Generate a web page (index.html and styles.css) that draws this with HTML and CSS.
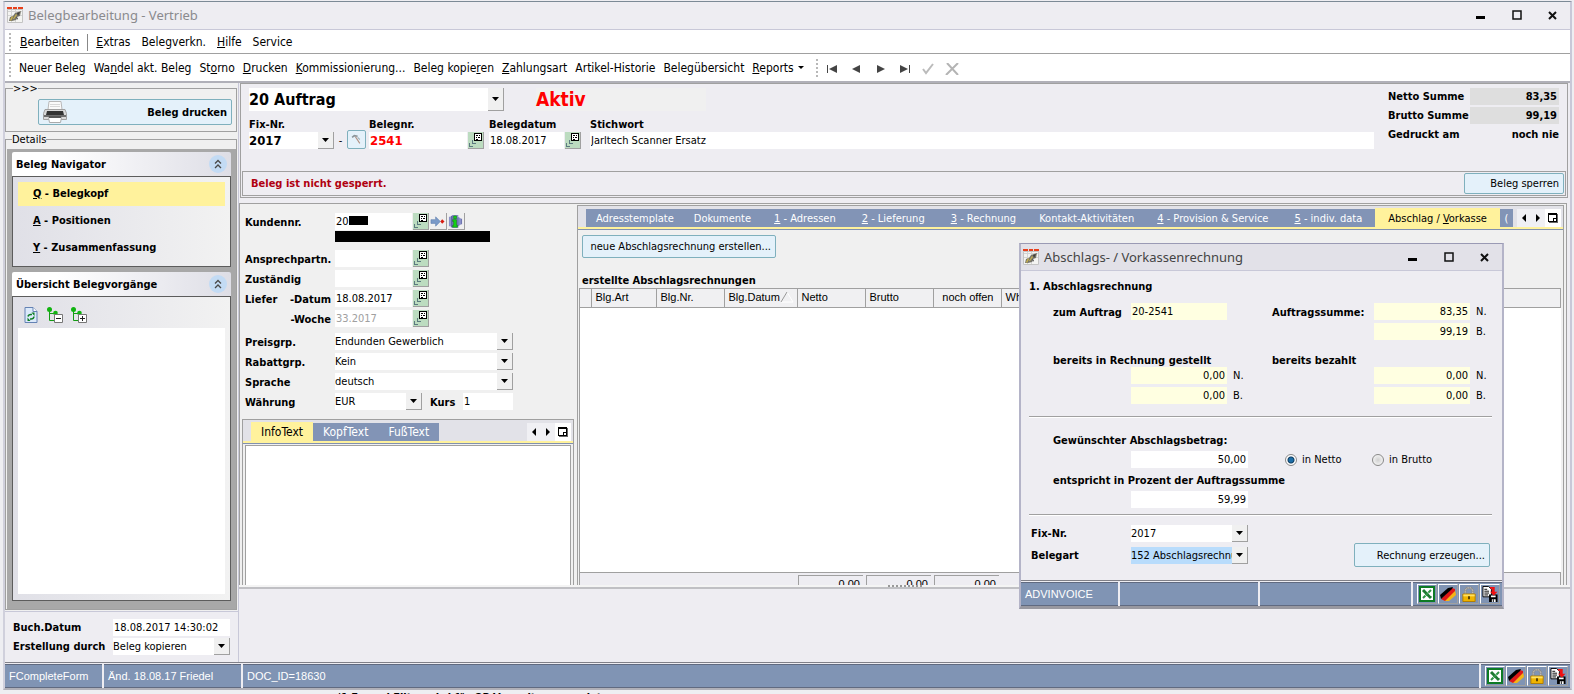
FILE: index.html
```
<!DOCTYPE html>
<html lang="de">
<head>
    <meta charset="UTF-8">
    <meta name="viewport" content="width=device-width, initial-scale=1.0">
    <title>Belegbearbeitung - Vertrieb</title>
    <link rel="stylesheet" href="styles.css">
</head>
<body>

    <!-- Icons -->
    <svg class="sprite" aria-hidden="true">
        <symbol id="i-app" viewBox="0 0 16 16">
            <path fill="#f4f4f2" stroke="#c4c4c4" d="M.5 2.500h15v13H.5z"/>
            <path fill="#e8401c" d="M0 0h5v2H0zM6 0h4v2H6zM11 0h5v2h-5z"/>
            <path stroke="#d4d4d4" d="M1 4.500h14M1 8.500h14M4.500 3v12M8.500 3v12"/>
            <path fill="#77756a" d="M2 14l1-4 3-1 2-3 6-2-1 5-3 1-1 3-4 1z"/>
            <path fill="#c9b24c" d="M3 13l2-4 1 1-2 4zM6 12l3-5 1 1-3 4z"/>
            <path fill="#3f3f3c" d="M10 6l3-1-2 4zM9 10l2 1-1 2z"/>
        </symbol>
        <symbol id="i-printer" viewBox="0 0 24 22">
            <path fill="#fafafa" stroke="#b8b8b8" d="M6 .5h12l1 8H5z"/>
            <path stroke="#d8d8d8" d="M7 3.500h10M7 5.500h10"/>
            <path fill="#d9d9d9" stroke="#a0a0a0" d="M2 8.500h20l1.500 4v6H.5v-6z"/>
            <path fill="#333" d="M4 10h16l1 4H3z"/>
            <path fill="#6d6d6d" d="M1 14h22v2H1z"/>
            <path fill="#fff" stroke="#aaa" d="M5.500 16.500h13l-1 5h-11z"/>
            <path fill="#555" d="M6 15h12v2H6z"/>
        </symbol>
        <symbol id="i-pick" viewBox="0 0 15 16">
            <path fill="#fff" d="M6 1h8v8H6z"/>
            <path fill="#000" d="M6 1h8v1H6zM6 1h1v8H6zM13 1h1v8h-1zM6 8h8v1H6zM8 3h2v1H8zM11 3h1v1h-1zM8 5h1v1H8zM10 5h2v1h-2zM8 7h2v1H8z"/>
            <path fill="#5c7a80" d="M4 8h1v4H4zM4 11h4v1H4zM1 11h1v4H1zM1 14h4v1H1z"/>
        </symbol>
        <symbol id="i-hammer" viewBox="0 0 10 10">
            <path fill="none" stroke="#8a9499" stroke-width="1.500" d="M1 3l2-1.500 3 .5"/>
            <path stroke="#b08f80" d="M4 2.500l4 6"/>
            <path stroke="#9fb0ba" d="M6 3l2 2"/>
        </symbol>
        <symbol id="i-goto" viewBox="0 0 16 16">
            <path fill="#7a9ac8" stroke="#5c7cab" stroke-width=".6" d="M1 6h5V3l5 5-5 5v-3H1z"/>
            <path fill="#d81c10" d="M13 5.500L15.500 8 13 10.500 11 8z"/>
        </symbol>
        <symbol id="i-info" viewBox="0 0 16 16">
            <path fill="#8a90c8" d="M1 3h2v10H1zM4 1h7v14H4zM11 3l3 2v6l-3 2z"/>
            <path fill="#5f66a8" d="M3 2h2v12H3zM14 5h1v6h-1zM10 4h1v9h-1z"/>
            <path fill="#14d414" stroke="#0a7a0a" stroke-width=".6" d="M6 2h3v3H6zM5 6h4v6h1v2H5v-2h1V8H5z"/>
        </symbol>
        <symbol id="i-up" viewBox="0 0 18 18">
            <circle cx="9" cy="9" r="9" fill="#c3dbf4"/>
            <path fill="none" stroke="#4a4a4a" stroke-width="1.300" d="M6 8.500l3-3 3 3M6 13l3-3 3 3"/>
        </symbol>
        <symbol id="i-refresh" viewBox="0 0 13 16">
            <path fill="#dbe9fa" stroke="#6482b4" d="M.5.5h8l4 4v11H.5z"/>
            <path fill="#fff" stroke="#6482b4" d="M8.500.5v4h4"/>
            <path fill="none" stroke="#0c7d22" stroke-width="1.500" d="M3.500 9.500q.5-2.500 4-2M9.500 9.500q-.5 3-4 2.500"/>
            <path fill="#0c7d22" d="M7 5.500h3V9zM6 14H3v-3.500z"/>
        </symbol>
        <symbol id="i-tree" viewBox="0 0 16 16">
            <path fill="none" stroke="#149c14" d="M2.500 3v10.500H8M2.500 6.500H8"/>
            <circle cx="2.500" cy="2.500" r="2.500" fill="#10b410"/>
            <circle cx="8.500" cy="6" r="2.300" fill="#10b410"/>
            <path fill="#fff" stroke="#777" d="M7.500 7.500h8v8h-8z"/>
            <path stroke="#222" d="M9 11.500h5"/>
        </symbol>
        <symbol id="i-treeplus" viewBox="0 0 16 16">
            <use href="#i-tree"/>
            <path stroke="#222" d="M11.500 9v5"/>
        </symbol>
        <symbol id="i-left" viewBox="0 0 8 8"><path d="M6 0v8L2 4z"/></symbol>
        <symbol id="i-right" viewBox="0 0 8 8"><path d="M2 0v8l4-4z"/></symbol>
        <symbol id="i-list" viewBox="0 0 10 10">
            <path d="M0 0h9v9H0z"/>
            <path fill="#fff" d="M1 2h7v6H1z"/>
            <path fill="#666" d="M9 1h1v9H1V9h8z"/>
            <path d="M5 5h3v1H6v2H5z"/>
        </symbol>
        <symbol id="i-excel" viewBox="0 0 16 16">
            <path fill="#fff" stroke="#0d7a24" stroke-width="2" d="M1 1h14v14H1z"/>
            <path stroke="#1d7a30" stroke-width="3" d="M4 4l8 8"/>
            <path stroke="#2f9444" stroke-width="2" d="M12 4l-8 8"/>
            <path stroke="#fff" stroke-width=".6" d="M6 3l6 7M3 6l6 6"/>
        </symbol>
        <symbol id="i-flag" viewBox="0 0 16 16">
            <path fill="#f4b416" d="M4 15L15 4l1 5-7 6z"/>
            <path fill="#e01818" d="M1 13L12 2l3 1v2L5 15z"/>
            <path d="M0 9l8-7 5-1-1 2L1 13z"/>
        </symbol>
        <symbol id="i-lock" viewBox="0 0 16 17">
            <path fill="none" stroke="#8c8c8c" stroke-width="2.500" d="M4 9V4.500L6 2h4l2 2.500V9"/>
            <path fill="none" stroke="#ddd" stroke-dasharray="1 1" d="M4 8V4.500L6 2h4l2 2.500V8"/>
            <path fill="#f0b400" stroke="#b07c00" d="M1.500 8.500h13v8h-13z"/>
            <path fill="#ffe060" d="M2 9h12v2H2z"/>
            <path fill="#553c00" d="M7 11h2v3H7z"/>
        </symbol>
        <symbol id="i-export" viewBox="0 0 16 17">
            <path fill="#fff" stroke="#000" d="M.5.5h6l3 3v8h-9z"/>
            <path stroke="#000" d="M2 3.500h3M2 5.500h5M2 7.500h5M2 9.500h4"/>
            <path d="M7 9h9v8H7z"/>
            <path fill="#fff" d="M9 10h5v2H9zM10 14h4v3h-4z"/>
            <path d="M11 14h1v3h-1z"/>
            <path fill="#f01010" d="M8 1h5v5h3l-4 4-4-4h2V3H8z"/>
        </symbol>
        <symbol id="i-min" viewBox="0 0 12 12"><path d="M1 7h9v3H1z"/></symbol>
        <symbol id="i-max" viewBox="0 0 12 12"><path fill="none" stroke="#111" stroke-width="1.500" d="M2 2h8v8H2z"/></symbol>
        <symbol id="i-close" viewBox="0 0 12 12"><path fill="none" stroke="#111" stroke-width="2" d="M2 3l7 7M9 3l-7 7"/></symbol>
    </svg>

    <div class="window">
        <header class="titlebar">
            <svg class="ic16"><use href="#i-app"/></svg>
            <h1>Belegbearbeitung - Vertrieb</h1>
            <button class="win" aria-label="Minimieren"><svg><use href="#i-min"/></svg></button>
            <button class="win" aria-label="Maximieren"><svg><use href="#i-max"/></svg></button>
            <button class="win" aria-label="Schließen"><svg><use href="#i-close"/></svg></button>
        </header>

        <nav class="menubar">
            <span class="grip"></span>
            <button class="first"><u>B</u>earbeiten</button>
            <button><u>E</u>xtras</button>
            <button>Belegverkn.</button>
            <button><u>H</u>ilfe</button>
            <button>Service</button>
        </nav>

        <nav class="toolbar">
            <span class="grip"></span>
            <button>Neuer Beleg</button>
            <button>Wa<u>n</u>del akt. Beleg</button>
            <button>St<u>o</u>rno</button>
            <button><u>D</u>rucken</button>
            <button><u>K</u>ommissionierung...</button>
            <button>Beleg kopie<u>r</u>en</button>
            <button><u>Z</u>ahlungsart</button>
            <button>Artikel-Historie</button>
            <button>Belegübersicht</button>
            <button class="drop"><u>R</u>eports</button>
            <span class="grip"></span>
            <div class="record-nav">
                <button aria-label="Erster"><svg viewBox="0 0 14 12"><path d="M2 2h1v8H2zM12 2v8L4 6z"/></svg></button>
                <button aria-label="Zurück"><svg viewBox="0 0 14 12"><path d="M11 2v8L3 6z"/></svg></button>
                <button aria-label="Weiter"><svg viewBox="0 0 14 12"><path d="M4 2v8l8-4z"/></svg></button>
                <button aria-label="Letzter"><svg viewBox="0 0 14 12"><path d="M12 2h1v8h-1zM3 2v8l8-4z"/></svg></button>
                <button aria-label="Speichern"><svg viewBox="0 0 14 12"><path fill="none" stroke="#bbb" stroke-width="2" d="M2 6l3 4 7-9"/></svg></button>
                <button aria-label="Abbrechen"><svg viewBox="0 0 14 12"><path fill="none" stroke="#b4b4b4" stroke-width="2" d="M2 0l11 12M13 0L1 12"/></svg></button>
            </div>
        </nav>

        <div class="main">
            <aside class="side">
                <fieldset class="quick">
                    <legend>&gt;&gt;&gt;</legend>
                    <button class="btn print"><svg><use href="#i-printer"/></svg>Beleg drucken</button>
                </fieldset>

                <fieldset class="details">
                    <legend>Details</legend>
                    <div class="groups">
                        <section class="group">
                            <h2>Beleg Navigator <button class="fold" aria-label="Einklappen"><svg><use href="#i-up"/></svg></button></h2>
                            <div class="group-body links">
                                <a href="#" class="active"><u>Q</u> - Belegkopf</a>
                                <a href="#"><u>A</u> - Positionen</a>
                                <a href="#"><u>Y</u> - Zusammenfassung</a>
                            </div>
                        </section>
                        <section class="group grow">
                            <h2>Übersicht Belegvorgänge <button class="fold" aria-label="Einklappen"><svg><use href="#i-up"/></svg></button></h2>
                            <div class="group-body tree">
                                <div class="tree-tools">
                                    <button aria-label="Aktualisieren"><svg><use href="#i-refresh"/></svg></button>
                                    <button aria-label="Zuklappen"><svg><use href="#i-tree"/></svg></button>
                                    <button aria-label="Aufklappen"><svg><use href="#i-treeplus"/></svg></button>
                                </div>
                                <div class="tree-list"></div>
                            </div>
                        </section>
                    </div>
                </fieldset>

                <div class="created">
                    <label for="buchdatum">Buch.Datum</label>
                    <input id="buchdatum" value="18.08.2017 14:30:02">
                    <label for="erstellung">Erstellung durch</label>
                    <span class="combo"><select id="erstellung"><option>Beleg kopieren</option></select></span>
                </div>
            </aside>

            <main class="content">
                <section class="head">
                    <div class="head-top">
                        <div class="head-fields">
                            <div class="head-row">
                                <span class="combo big"><select aria-label="Belegart"><option>20 Auftrag</option></select></span>
                                <strong class="state">Aktiv</strong>
                            </div>
                            <div class="head-row keys">
                                <div class="field fix">
                                    <label for="fixnr">Fix-Nr.</label>
                                    <span class="combo strong"><select id="fixnr"><option>2017</option></select></span>
                                </div>
                                <span class="dash">-</span>
                                <button class="btn tool" aria-label="Nummer ändern"><svg><use href="#i-hammer"/></svg></button>
                                <div class="field nr">
                                    <label for="belegnr">Belegnr.</label>
                                    <span class="pick"><input id="belegnr" class="red" value="2541"><button aria-label="Auswählen"><svg><use href="#i-pick"/></svg></button></span>
                                </div>
                                <div class="field date">
                                    <label for="belegdatum">Belegdatum</label>
                                    <span class="pick"><input id="belegdatum" value="18.08.2017"><button aria-label="Auswählen"><svg><use href="#i-pick"/></svg></button></span>
                                </div>
                                <div class="field word">
                                    <label for="stichwort">Stichwort</label>
                                    <input id="stichwort" value="Jarltech Scanner Ersatz">
                                </div>
                            </div>
                        </div>
                        <dl class="sums">
                            <dt>Netto Summe</dt><dd>83,35</dd>
                            <dt>Brutto Summe</dt><dd>99,19</dd>
                            <dt>Gedruckt am</dt><dd class="plain">noch nie</dd>
                        </dl>
                    </div>
                    <div class="lockbar">
                        <strong>Beleg ist nicht gesperrt.</strong>
                        <button class="btn">Beleg sperren</button>
                    </div>
                </section>

                <div class="work">
                    <section class="customer">
                        <div class="form">
                            <label for="kunde">Kundennr.</label>
                            <div class="line">
                                <span class="pick"><input id="kunde" value="20"><i class="redact"></i><button aria-label="Auswählen"><svg><use href="#i-pick"/></svg></button></span>
                                <button class="mini" aria-label="Gehe zu"><svg><use href="#i-goto"/></svg></button>
                                <button class="mini" aria-label="Info"><svg><use href="#i-info"/></svg></button>
                            </div>
                            <div class="name-bar"></div>
                            <label for="partner">Ansprechpartn.</label>
                            <span class="pick"><input id="partner"><button aria-label="Auswählen"><svg><use href="#i-pick"/></svg></button></span>
                            <label for="zust">Zuständig</label>
                            <span class="pick"><input id="zust"><button aria-label="Auswählen"><svg><use href="#i-pick"/></svg></button></span>
                            <label for="ldatum" class="split"><span>Liefer</span><span>-Datum</span></label>
                            <span class="pick"><input id="ldatum" value="18.08.2017"><button aria-label="Auswählen"><svg><use href="#i-pick"/></svg></button></span>
                            <label for="lwoche" class="split"><span></span><span>-Woche</span></label>
                            <span class="pick"><input id="lwoche" class="muted" value="33.2017"><button aria-label="Auswählen"><svg><use href="#i-pick"/></svg></button></span>
                        </div>
                        <div class="form">
                            <label for="preis">Preisgrp.</label>
                            <span class="combo"><select id="preis"><option>Endunden Gewerblich</option></select></span>
                            <label for="rabatt">Rabattgrp.</label>
                            <span class="combo"><select id="rabatt"><option>Kein</option></select></span>
                            <label for="sprache">Sprache</label>
                            <span class="combo"><select id="sprache"><option>deutsch</option></select></span>
                            <label for="waehrung">Währung</label>
                            <div class="line money">
                                <span class="combo"><select id="waehrung"><option>EUR</option></select></span>
                                <label for="kurs">Kurs</label>
                                <input id="kurs" value="1">
                            </div>
                        </div>
                        <div class="texts">
                            <div class="tabs">
                                <button class="tab on">InfoText</button>
                                <button class="tab">KopfText</button>
                                <button class="tab">FußText</button>
                                <span class="tab-nav">
                                    <button aria-label="Zurück"><svg><use href="#i-left"/></svg></button>
                                    <button aria-label="Weiter"><svg><use href="#i-right"/></svg></button>
                                    <button class="list" aria-label="Liste"><svg><use href="#i-list"/></svg></button>
                                </span>
                            </div>
                            <textarea aria-label="InfoText"></textarea>
                        </div>
                    </section>

                    <section class="pages">
                        <div class="tabs">
                            <button class="tab">Adresstemplate</button>
                            <button class="tab">Dokumente</button>
                            <button class="tab key"><u>1</u> - Adressen</button>
                            <button class="tab key"><u>2</u> - Lieferung</button>
                            <button class="tab key"><u>3</u> - Rechnung</button>
                            <button class="tab">Kontakt-Aktivitäten</button>
                            <button class="tab key"><u>4</u> - Provision &amp; Service</button>
                            <button class="tab key"><u>5</u> - indiv. data</button>
                            <button class="tab on">Abschlag / <u>V</u>orkasse</button>
                            <button class="tab cut" aria-label="Nächste Seite">(</button>
                            <span class="tab-nav">
                                <button aria-label="Zurück"><svg><use href="#i-left"/></svg></button>
                                <button aria-label="Weiter"><svg><use href="#i-right"/></svg></button>
                                <button class="list" aria-label="Liste"><svg><use href="#i-list"/></svg></button>
                            </span>
                        </div>
                        <button class="btn new">neue Abschlagsrechnung erstellen...</button>
                        <h3>erstellte Abschlagsrechnungen</h3>
                        <div class="grid">
                            <table>
                                <thead>
                                    <tr>
                                        <th class="c-mark"></th>
                                        <th class="c-art">Blg.Art</th>
                                        <th class="c-nr">Blg.Nr.</th>
                                        <th class="c-date">Blg.Datum<svg viewBox="0 0 14 12"><path fill="none" stroke="#fff" d="M7 1l6 10H1"/><path stroke="#999" d="M1 11L7 1"/></svg></th>
                                        <th class="c-sum">Netto</th>
                                        <th class="c-sum">Brutto</th>
                                        <th class="c-sum num">noch offen</th>
                                        <th>Whg</th>
                                    </tr>
                                </thead>
                            </table>
                            <div class="totals">
                                <span>0,00</span>
                                <span>0,00</span>
                                <span>0,00</span>
                            </div>
                        </div>
                    </section>
                </div>

                <div class="splitter"><span></span></div>
                <div class="lower"></div>
            </main>
        </div>

        <footer class="status">
            <span class="cell s1">FCompleteForm</span>
            <span class="cell s2">Änd. 18.08.17 Friedel</span>
            <span class="cell s3">DOC_ID=18630</span>
            <span class="cell icons">
                <button aria-label="Excel"><svg><use href="#i-excel"/></svg></button>
                <button aria-label="Sprache"><svg><use href="#i-flag"/></svg></button>
                <button aria-label="Sperre"><svg><use href="#i-lock"/></svg></button>
                <button aria-label="Export"><svg><use href="#i-export"/></svg></button>
            </span>
        </footer>
    </div>

    <div class="behind">'1 Formel Filter wird für OP-Verwaltung wendet</div>

    <!-- Dialog Abschlagsrechnung -->
    <div class="dialog" role="dialog" aria-labelledby="dlg-title">
        <header class="titlebar">
            <svg class="ic16"><use href="#i-app"/></svg>
            <h1 id="dlg-title">Abschlags- / Vorkassenrechnung</h1>
            <button class="win" aria-label="Minimieren"><svg><use href="#i-min"/></svg></button>
            <button class="win" aria-label="Maximieren"><svg><use href="#i-max"/></svg></button>
            <button class="win" aria-label="Schließen"><svg><use href="#i-close"/></svg></button>
        </header>
        <div class="dlg-body">
            <h3>1. Abschlagsrechnung</h3>
            <div class="calc">
                <label for="auftrag">zum Auftrag</label>
                <input id="auftrag" class="calc-in" value="20-2541" readonly>
                <span></span>
                <label for="sumN">Auftragssumme:</label>
                <input id="sumN" class="calc-in num" value="83,35" readonly>
                <span>N.</span>
                <input class="calc-in num right" aria-label="Auftragssumme Brutto" value="99,19" readonly>
                <span>B.</span>
            </div>
            <div class="calc second">
                <b class="wide">bereits in Rechnung gestellt</b>
                <b class="wide">bereits bezahlt</b>
                <input class="calc-in num left" aria-label="Rechnung Netto" value="0,00" readonly>
                <span>N.</span>
                <input class="calc-in num right" aria-label="Bezahlt Netto" value="0,00" readonly>
                <span>N.</span>
                <input class="calc-in num left" aria-label="Rechnung Brutto" value="0,00" readonly>
                <span>B.</span>
                <input class="calc-in num right" aria-label="Bezahlt Brutto" value="0,00" readonly>
                <span>B.</span>
            </div>
            <hr>
            <div class="wish">
                <label for="betrag">Gewünschter Abschlagsbetrag:</label>
                <div class="wish-row">
                    <input id="betrag" class="num" value="50,00">
                    <label class="radio"><input type="radio" name="art" checked>in Netto</label>
                    <label class="radio"><input type="radio" name="art">in Brutto</label>
                </div>
                <label for="prozent">entspricht in Prozent der Auftragssumme</label>
                <div class="wish-row"><input id="prozent" class="num" value="59,99"></div>
            </div>
            <hr>
            <div class="make">
                <div class="make-form">
                    <label for="dfix">Fix-Nr.</label>
                    <span class="combo"><select id="dfix"><option>2017</option></select></span>
                    <label for="dart">Belegart</label>
                    <span class="combo sel"><select id="dart"><option>152 Abschlagsrechnung</option></select></span>
                </div>
                <button class="btn">Rechnung erzeugen...</button>
            </div>
        </div>
        <footer class="status">
            <span class="cell d1">ADVINVOICE</span>
            <span class="cell d2"></span>
            <span class="cell s3"></span>
            <span class="cell icons">
                <button aria-label="Excel"><svg><use href="#i-excel"/></svg></button>
                <button aria-label="Sprache"><svg><use href="#i-flag"/></svg></button>
                <button aria-label="Sperre"><svg><use href="#i-lock"/></svg></button>
                <button aria-label="Export"><svg><use href="#i-export"/></svg></button>
            </span>
        </footer>
    </div>

</body>
</html>
```
FILE: styles.css
```
* {
    box-sizing: border-box;
}

body {
    margin: 0;
    height: 100vh;
    display: flex;
    flex-direction: column;
    position: relative;
    overflow: hidden;
    background: #eeeef2;
    color: #000;
    font-family: Tahoma, "DejaVu Sans Condensed", "Noto Sans", sans-serif;
    font-size: 11px;
    line-height: 17px;
}

button, input, select, textarea {
    margin: 0;
    padding: 0;
    border: none;
    border-radius: 0;
    background: none;
    color: inherit;
    font: inherit;
}

h1, h2, h3, dl, dd {
    margin: 0;
    font-size: 11px;
}

label, b, dt, dd {
    font-weight: bold;
    white-space: nowrap;
}

svg {
    display: block;
}

.sprite {
    position: absolute;
    width: 0;
    height: 0;
}

.ic16 {
    width: 16px;
    height: 16px;
}

.num {
    text-align: right;
}

/* ---------- window ---------- */
.window {
    flex: 1;
    min-height: 0;
    display: flex;
    flex-direction: column;
    margin: 1px 2px 0 3px;
    border-top: 1px solid #7c8a96;
    border-left: 2px solid #d0d0dc;
    border-right: 2px solid #c8c8d8;
    border-bottom: 2px solid #b0b0b8;
    background: #eeedf2;
}

.titlebar {
    display: flex;
    align-items: center;
    height: 28px;
    padding: 0 11px 1px 2px;
    border-bottom: 1px solid #c8c8d8;
}

.titlebar h1 {
    flex: 1;
    margin-left: 5px;
    color: #8a8a8e;
    font: 13px/20px "Noto Sans", "Open Sans", sans-serif;
}

.win {
    margin-left: 24px;
}

.win svg {
    width: 12px;
    height: 12px;
}

.menubar, .toolbar {
    display: flex;
    align-items: center;
    background: #fff;
    border-bottom: 1px solid #a0a0a0;
    font-size: 12px;
}

.menubar {
    height: 24px;
    padding: 2px 0 0 4px;
}

.toolbar {
    height: 29px;
    padding: 2px 0 0 4px;
    border-bottom: 2px solid #b0b0b8;
}

.grip {
    width: 2px;
    height: 20px;
    background: repeating-linear-gradient(#b8b8b8 0 2px, #fff 2px 4px);
}

.menubar button + button {
    margin-left: 11px;
}

.menubar .first {
    margin-left: 9px;
    padding-right: 8px;
    border-right: 1px solid #888;
}

.menubar .first + button {
    margin-left: 8px;
}

.toolbar > button {
    margin-left: 8px;
}

.drop::after {
    content: "";
    display: inline-block;
    margin: 0 12px 3px 4px;
    border: 3px solid transparent;
    border-top: 3px solid #000;
    border-bottom: none;
}

.record-nav {
    display: flex;
    gap: 10px;
    margin-left: 7px;
}

.record-nav svg {
    width: 14px;
    height: 12px;
    fill: #444;
}

.main {
    flex: 1;
    min-height: 0;
    display: flex;
}

/* ---------- shared controls ---------- */
.btn {
    border: 1px solid #7fb0bd;
    border-radius: 2px;
    background: #e4f1fa;
    text-align: right;
}

input {
    height: 17px;
    padding-left: 1px;
    background: #fff;
    min-width: 0;
}

input.num {
    padding-right: 2px;
}

.muted {
    color: #a0a0a0;
}

.combo {
    display: flex;
    height: 17px;
    background: #fff;
}

.combo select {
    flex: 1;
    min-width: 0;
    appearance: none;
    overflow: hidden;
}

.combo::after {
    content: "";
    width: 15px;
    border-right: 1px solid #a0a0a0;
    border-bottom: 1px solid #a0a0a0;
    background: #f0f0f0 url("data:image/svg+xml,%3Csvg xmlns='http://www.w3.org/2000/svg' width='7' height='4'%3E%3Cpath d='M0 0h7L3.500 4z'/%3E%3C/svg%3E") no-repeat center;
}

.combo.sel select {
    background: #b8dcfc;
}

.pick {
    display: flex;
    height: 17px;
    position: relative;
}

.pick input {
    flex: 1;
}

.pick button {
    width: 16px;
    margin-left: 1px;
    background: #bcdcc0;
    border-right: 1px solid #a0a0a0;
    border-bottom: 1px solid #a0a0a0;
}

.pick svg {
    width: 15px;
    height: 16px;
}

/* ---------- left side ---------- */
.side {
    width: 234px;
    display: flex;
    flex-direction: column;
    border-right: 1px solid #c8c8d8;
    background: #f0f0f0;
}

fieldset {
    margin: 0 1px 3px 0;
    min-width: 0;
    padding: 6px 4px 6px 5px;
    border: 1px solid #a0a0a0;
}

legend {
    margin-left: 2px;
    padding: 0;
    line-height: 9px;
}

.quick legend {
    padding-top: 2px;
    line-height: 8px;
}

.print {
    display: flex;
    justify-content: space-between;
    align-items: center;
    width: 194px;
    height: 26px;
    margin-left: auto;
    padding: 0 4px;
    font-weight: bold;
}

.print svg {
    width: 24px;
    height: 22px;
}

.details {
    flex: 1;
    min-height: 0;
    display: flex;
    flex-direction: column;
    margin-bottom: 1px;
    padding: 5px 0 0 1px;
}

.details legend {
    margin-left: 5px;
}

.groups {
    height: 100%;
    display: flex;
    flex-direction: column;
    gap: 5px;
    padding: 3px 5px 8px;
    background: #a8a8a8;
}

.group {
    display: flex;
    flex-direction: column;
}

.grow {
    flex: 1;
}

.group h2 {
    display: flex;
    justify-content: space-between;
    align-items: center;
    height: 24px;
    padding: 0 4px;
    background: linear-gradient(to right, #fff 20%, #dedee6);
    border-radius: 2px 2px 0 0;
}

.fold svg {
    width: 18px;
    height: 18px;
}

.group-body {
    border: 1px solid #5c5c5c;
    background: linear-gradient(to right, #e0e0e7, #f2f2f2);
}

.links {
    display: flex;
    flex-direction: column;
    gap: 3px;
    padding: 5px 5px 6px;
}

.links a {
    padding-left: 15px;
    line-height: 24px;
    color: #000;
    font-weight: bold;
    text-decoration: none;
}

.links .active {
    background: #fff29c;
}

.tree {
    flex: 1;
    display: flex;
    flex-direction: column;
    padding: 10px 5px 6px;
}

.tree-tools {
    display: flex;
    gap: 8px;
    padding: 0 0 5px 5px;
}

.tree-tools svg {
    width: 16px;
    height: 16px;
}

.tree-list {
    flex: 1;
    background: #fff;
}

.created {
    display: grid;
    grid-template-columns: 100px 1fr;
    gap: 2px 0;
    align-items: center;
    padding: 7px 8px;
    border-top: 1px solid #c8c8d8;
    background: #eeedf2;
}

/* ---------- header of the document ---------- */
.content {
    flex: 1;
    min-width: 0;
    display: flex;
    flex-direction: column;
}

.head {
    margin: 0 2px 0 1px;
    border: 1px solid #a0a0a0;
    padding: 1px;
}

.head-top {
    display: flex;
    justify-content: space-between;
    height: 86px;
    padding: 3px 7px 0;
}

.head-fields {
    flex: 1;
    max-width: 1125px;
}

.head-row {
    display: flex;
}

.combo.big {
    width: 255px;
    height: 23px;
    font-size: 16px;
    font-weight: bold;
    line-height: 23px;
}

.state {
    width: 170px;
    margin-left: 32px;
    background: #f0f0f0;
    color: #f00;
    font-size: 19px;
    line-height: 23px;
}

.keys {
    align-items: flex-end;
    margin-top: 6px;
}

.field {
    display: flex;
    flex-direction: column;
}

.field label {
    line-height: 15px;
}

.field.fix {
    width: 85px;
}

.combo.strong, .red {
    font-size: 13px;
    font-weight: bold;
}

.dash {
    width: 13px;
    text-align: center;
}

.btn.tool {
    width: 19px;
    height: 19px;
    padding: 3px;
}

.tool svg {
    width: 11px;
    height: 11px;
}

.field.nr {
    width: 115px;
    margin-left: 3px;
}

.red {
    color: #f00;
}

.field.date {
    width: 92px;
    margin-left: 5px;
}

.field.word {
    flex: 1;
    margin-left: 9px;
}

.sums {
    display: grid;
    grid-template-columns: 82px 89px;
    grid-auto-rows: 17px;
    gap: 2px 0;
}

.sums dd {
    padding-right: 2px;
    background: #dedede;
    text-align: right;
}

.sums .plain {
    padding: 0;
    background: none;
}

.lockbar {
    display: flex;
    align-items: center;
    justify-content: space-between;
    padding: 1px 1px 1px 8px;
    border: 1px solid #a0a0a0;
}

.lockbar strong {
    color: #b00010;
}

.lockbar .btn {
    width: 100px;
    height: 21px;
    padding-right: 4px;
}

/* ---------- work area ---------- */
.work {
    flex: 1;
    min-height: 0;
    display: flex;
    margin: 5px 3px 0 0;
    border-top: 1px solid #a0a0a0;
    border-left: 1px solid #a0a0a0;
    border-right: 1px solid #a0a0a0;
    background: #f0f0f0;
}

.customer {
    width: 337px;
    display: flex;
    flex-direction: column;
    padding: 9px 3px 0 2px;
}

.form {
    display: grid;
    grid-template-columns: 90px 178px;
    row-gap: 3px;
    align-items: center;
    margin: 0 0 6px 3px;
}

.form label {
    line-height: 19px;
    height: 17px;
}

.form .pick {
    width: 94px;
}

.line {
    display: flex;
    gap: 1px;
}

.mini {
    width: 17px;
    height: 17px;
    border-right: 1px solid #a0a0a0;
    border-bottom: 1px solid #a0a0a0;
}

.mini svg {
    width: 15px;
    height: 15px;
}

/* blacked out customer data */
.redact {
    position: absolute;
    left: 14px;
    top: 3px;
    width: 19px;
    height: 9px;
    background: #000;
}

.name-bar {
    grid-column: 2;
    width: 155px;
    height: 11px;
    margin: -2px 0 5px;
    background: #000;
}

.split {
    display: flex;
    justify-content: space-between;
    padding-right: 4px;
}

.money .combo {
    width: 87px;
}

.money label {
    width: 39px;
    padding-left: 7px;
}

.money input {
    width: 50px;
}

.texts {
    flex: 1;
    display: flex;
    flex-direction: column;
    border: 1px solid #a0a0a0;
    border-bottom: none;
    margin-top: 3px;
}

.texts textarea {
    flex: 1;
    margin: 1px 2px 0;
    border: 1px solid #a0a0a0;
    border-bottom: none;
    background: #fff;
    resize: none;
}

.tabs {
    display: flex;
    align-items: flex-end;
    height: 24px;
    padding-left: 8px;
    border-bottom: 1px solid #8090b0;
    background: linear-gradient(#e2e2e8 21px, #fff29c 21px);
}

.tab {
    flex: none;
    height: 18px;
    margin-bottom: 2px;
    padding: 0 10px;
    background: #8294b6;
    color: #fff;
}

.tab.key {
    padding: 0 13px;
}

.tab.on {
    height: 21px;
    margin-bottom: 0;
    padding: 0 13px;
    background: #fff29c;
    color: #000;
}

.texts .tab {
    font-size: 12px;
}

.texts .tab.on {
    padding: 0 10px;
}

.tab.cut {
    width: 13px;
    padding: 0;
}

.tab-nav {
    display: flex;
    margin: 0 2px 2px auto;
    background: #f0f0f4;
}

.tab-nav button {
    display: flex;
    align-items: center;
    justify-content: center;
    width: 14px;
    height: 18px;
}

.tab-nav svg {
    width: 8px;
    height: 8px;
}

.tab-nav .list {
    width: 16px;
    background: #fff;
}

.list svg {
    width: 10px;
    height: 10px;
}

.pages {
    flex: 1;
    min-width: 0;
    display: flex;
    flex-direction: column;
    margin: 1px 2px 0 0;
    border: 1px solid #a0a0a0;
    border-bottom: none;
}

.btn.new {
    width: 194px;
    height: 23px;
    margin: 5px 0 13px 4px;
    padding-right: 4px;
}

.pages h3 {
    padding-left: 4px;
    line-height: 19px;
    height: 17px;
}

.grid {
    flex: 1;
    display: flex;
    flex-direction: column;
    justify-content: space-between;
    margin: 0 2px 0 1px;
    border-top: 1px solid #a0a0a0;
    border-left: 1px solid #a0a0a0;
    background: #fff;
    font-family: "Liberation Sans", Arial, sans-serif;
}

table {
    table-layout: fixed;
    width: 100%;
    border-collapse: collapse;
}

th {
    height: 18px;
    padding: 0 0 0 4px;
    border-right: 1px solid #a0a0a0;
    border-bottom: 1px solid #a0a0a0;
    background: #f0f0f2;
    font-weight: normal;
    text-align: left;
    white-space: nowrap;
}

th svg {
    display: inline-block;
    width: 14px;
    height: 12px;
    vertical-align: -2px;
}

th.num {
    padding-right: 7px;
    text-align: right;
}

.c-mark {
    width: 11px;
}

.c-art {
    width: 65px;
}

.c-nr {
    width: 68px;
}

.c-date {
    width: 73px;
}

.c-sum {
    width: 68px;
}

.totals {
    display: flex;
    gap: 3px;
    height: 13px;
    padding: 2px 0 0 218px;
    overflow: hidden;
    border-top: 1px solid #a0a0a0;
    border-right: 1px solid #a0a0a0;
    background: #eeedf2;
}

.totals span {
    width: 65px;
    height: 20px;
    padding-right: 3px;
    border-top: 1px solid #a0a0a0;
    border-left: 1px solid #a0a0a0;
    text-align: right;
}

.splitter {
    height: 4px;
    border-bottom: 2px solid #c0c0c4;
    background: #f4f4f4;
}

.splitter span {
    display: block;
    width: 34px;
    height: 2px;
    margin: 0 auto;
    background: repeating-linear-gradient(to right, #999 0 2px, transparent 2px 4px);
}

.lower {
    height: 73px;
}

/* ---------- status bar ---------- */
.status {
    display: flex;
    gap: 2px;
    height: 26px;
    padding: 1px 0 0;
    border-top: 1px solid #808088;
    color: #fff;
    font-family: "Liberation Sans", Arial, sans-serif;
    line-height: 22px;
}

.cell {
    padding-left: 4px;
    background: #8094b4;
    border-top: 1px solid #606a80;
    border-bottom: 1px solid #606a80;
    white-space: nowrap;
}

.s1 {
    width: 97px;
}

.s2 {
    width: 137px;
}

.s3 {
    flex: 1;
}

.icons {
    display: flex;
    align-items: center;
    gap: 1px;
    padding: 0 2px 0 4px;
}

.icons button {
    padding: 1px;
    border: 1px solid #fff;
    border-right-color: #a0a0a0;
    border-bottom-color: #a0a0a0;
}

.icons svg {
    width: 16px;
    height: 16px;
}

/* form of another program peeking out below */
.behind {
    height: 4px;
    padding-left: 338px;
    overflow: hidden;
    font-weight: bold;
    line-height: 15px;
}

/* ---------- dialog ---------- */
.dialog {
    position: absolute;
    top: 243px;
    right: 70px;
    width: 485px;
    border: 1px solid #9a9ab4;
    border-bottom: 3px solid #9898a0;
    border-left: 2px solid #b4b4c8;
    border-right: 2px solid #b4b4c8;
    background: #eeedf2;
}

.dialog .titlebar {
    height: 27px;
    background: #e2e1e8;
}

.dialog .titlebar h1 {
    color: #444;
}

.dlg-body {
    padding: 7px 8px 13px;
}

.calc {
    display: grid;
    grid-template-columns: 78px 96px 45px 102px 96px 20px;
    row-gap: 3px;
    margin: 8px 0 0 24px;
}

.calc label {
    line-height: 19px;
    height: 17px;
}

.calc span {
    padding-left: 6px;
}

.calc.second {
    margin-top: 14px;
    row-gap: 3px;
}

.calc-in {
    width: 96px;
    background: #ffffe1;
}

.calc .left {
    grid-column: 2;
}

.calc .right {
    grid-column: 5;
}

.wide {
    grid-column: span 3;
    line-height: 13px;
    height: 10px;
}

hr {
    height: 2px;
    margin: 12px 2px 14px 0;
    border: none;
    border-top: 1px solid #a0a0a0;
    border-bottom: 1px solid #fff;
}

.wish {
    padding-left: 24px;
}

.wish-row {
    display: flex;
    align-items: center;
    padding-left: 78px;
    margin: 2px 0 4px;
}

.wish-row .num {
    width: 117px;
}

.radio {
    display: flex;
    align-items: center;
    gap: 5px;
    width: 87px;
    font-weight: normal;
}

.wish-row .num + .radio {
    margin-left: 37px;
}

.radio input {
    appearance: none;
    width: 12px;
    height: 12px;
    border: 1px solid #888;
    border-radius: 50%;
    padding: 0;
    background: radial-gradient(#d0d0d0, #fff);
}

.radio input:checked {
    background: radial-gradient(circle, #1c6ea8 0 2px, #103c60 3px, #fff 4px);
}

.wish + hr {
    margin: 6px 2px 9px 0;
}

.make {
    display: flex;
    justify-content: space-between;
    align-items: flex-end;
}

.make-form {
    display: grid;
    grid-template-columns: 100px 117px;
    row-gap: 5px;
    margin: 0 0 3px 2px;
}

.make .btn {
    width: 136px;
    height: 24px;
    margin-right: 4px;
    padding-right: 4px;
}

.d1 {
    width: 97px;
}

.d2 {
    width: 138px;
}
```
